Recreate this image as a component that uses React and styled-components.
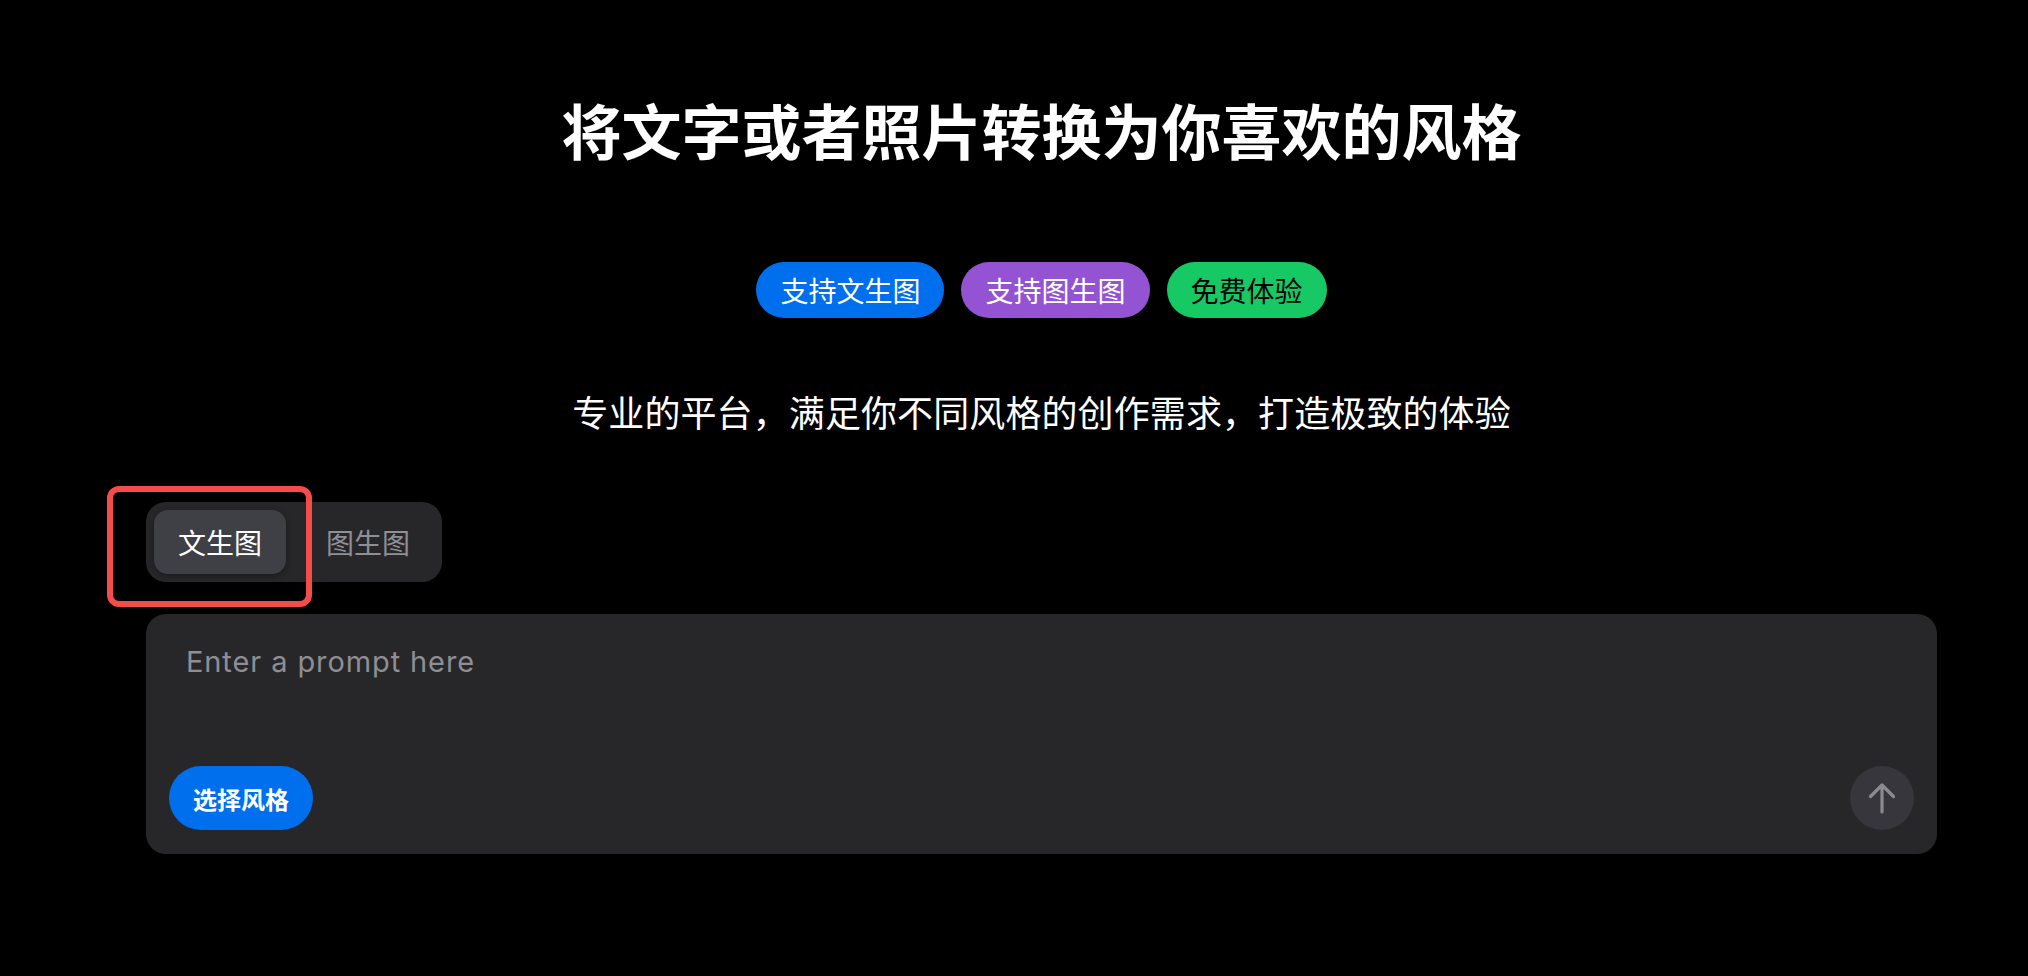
import React, { useState } from "react";
import styled, { createGlobalStyle } from "styled-components";

const Global = createGlobalStyle`
  html, body { margin: 0; padding: 0; background: #000; }
  body {
    font-family: "Noto Sans CJK SC", "Noto Sans", Inter, sans-serif;
    color: #fff;
    -webkit-font-smoothing: antialiased;
  }
  * { box-sizing: border-box; }
`;

const Page = styled.main`
  min-height: 976px;
  background: #000;
  padding: 93px 91px 0 146px;
  display: flex;
  flex-direction: column;
  align-items: center;
`;

const Title = styled.h1`
  margin: 0;
  font-size: 60px;
  line-height: 72px;
  font-weight: 700;
  color: #fff;
  letter-spacing: 0;
`;

const ChipRow = styled.div`
  margin-top: 97px;
  display: flex;
  gap: 17px;
`;

const Chip = styled.span`
  height: 56px;
  padding: 0 24px;
  border-radius: 999px;
  display: inline-flex;
  align-items: center;
  font-size: 28px;
  background: ${(p) => p.$bg};
  color: ${(p) => p.$fg};
`;

const Subtitle = styled.p`
  margin: 66px 0 0;
  font-size: 36px;
  line-height: 54px;
  color: #fff;
  letter-spacing: 0.1px;
`;

const Controls = styled.section`
  align-self: stretch;
  margin-top: 64px;
  display: flex;
  flex-direction: column;
  gap: 32px;
`;

const TabsWrap = styled.div`
  position: relative;
  align-self: flex-start;
`;

const TabList = styled.div`
  display: flex;
  gap: 16px;
  padding: 8px;
  border-radius: 20px;
  background: #27272a;
`;

const Tab = styled.button`
  height: 64px;
  padding: 0 24px;
  border: none;
  border-radius: 14px;
  font-family: inherit;
  font-size: 28px;
  cursor: pointer;
  background: ${(p) => (p.$active ? "#3f3f46" : "transparent")};
  color: ${(p) => (p.$active ? "#fff" : "#8f8f96")};
  box-shadow: ${(p) => (p.$active ? "0 2px 6px rgba(0,0,0,0.35)" : "none")};
`;

const Highlight = styled.div`
  position: absolute;
  left: -39px;
  top: -16px;
  width: 205px;
  height: 121px;
  border: 6px solid #f44c4a;
  border-radius: 12px;
  pointer-events: none;
`;

const Card = styled.div`
  height: 240px;
  border-radius: 20px;
  background: #27272a;
  display: flex;
  flex-direction: column;
`;

const Prompt = styled.textarea`
  flex: 1;
  resize: none;
  border: none;
  outline: none;
  background: transparent;
  padding: 27px 40px 0;
  font-family: Inter, "Noto Sans CJK SC", sans-serif;
  font-size: 29px;
  line-height: 42px;
  letter-spacing: 0.9px;
  color: #fff;
  &::placeholder { color: #8e8e95; }
`;

const Footer = styled.div`
  display: flex;
  justify-content: space-between;
  align-items: center;
  padding: 0 23px 24px;
`;

const StyleButton = styled.button`
  height: 64px;
  padding: 0 24px;
  border: none;
  border-radius: 999px;
  background: #006fee;
  color: #fff;
  font-family: inherit;
  font-size: 24px;
  font-weight: 700;
  cursor: pointer;
`;

const SendButton = styled.button`
  width: 64px;
  height: 64px;
  border: none;
  border-radius: 50%;
  background: #36363c;
  display: flex;
  align-items: center;
  justify-content: center;
  padding: 0;
  cursor: pointer;
`;

const ArrowUp = () => (
  <svg width="32" height="34" viewBox="0 0 32 34" fill="none">
    <path
      d="M16 31V4M4.5 15.5L16 4l11.5 11.5"
      stroke="#8a8a90"
      strokeWidth="3.2"
      strokeLinecap="round"
      strokeLinejoin="round"
    />
  </svg>
);

export default function App() {
  const [tab, setTab] = useState(0);
  return (
    <>
      <Global />
      <Page>
        <Title>将文字或者照片转换为你喜欢的风格</Title>
        <ChipRow>
          <Chip $bg="#006fee" $fg="#fff">支持文生图</Chip>
          <Chip $bg="#9353d3" $fg="#fff">支持图生图</Chip>
          <Chip $bg="#17c964" $fg="#000">免费体验</Chip>
        </ChipRow>
        <Subtitle>专业的平台，满足你不同风格的创作需求，打造极致的体验</Subtitle>
        <Controls>
          <TabsWrap>
            <TabList>
              <Tab $active={tab === 0} onClick={() => setTab(0)}>文生图</Tab>
              <Tab $active={tab === 1} onClick={() => setTab(1)}>图生图</Tab>
            </TabList>
            <Highlight />
          </TabsWrap>
          <Card>
            <Prompt placeholder="Enter a prompt here" />
            <Footer>
              <StyleButton>选择风格</StyleButton>
              <SendButton aria-label="send">
                <ArrowUp />
              </SendButton>
            </Footer>
          </Card>
        </Controls>
      </Page>
    </>
  );
}
